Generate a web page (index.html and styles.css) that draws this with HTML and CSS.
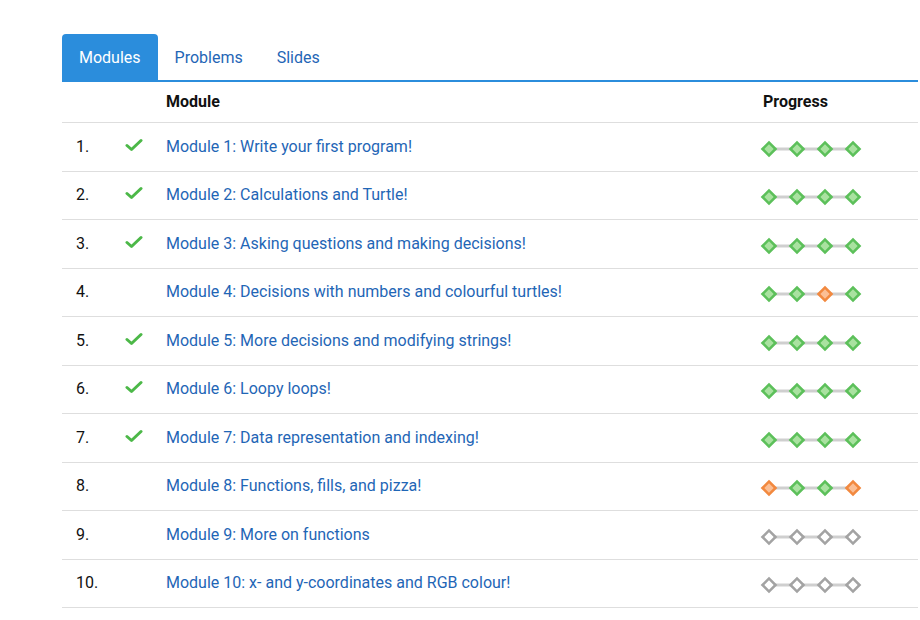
FILE: index.html
```html
<!DOCTYPE html>
<html>
<head>
<meta charset="utf-8">
<link rel="stylesheet" href="styles.css">
</head>
<body>
<div class="wrap">
  <ul class="tabs">
    <li class="tab active">Modules</li>
    <li class="tab">Problems</li>
    <li class="tab">Slides</li>
  </ul>
  <table class="mods">
    <thead>
      <tr><th class="c-num"></th><th class="c-chk"></th><th class="c-name">Module</th><th class="c-prog">Progress</th></tr>
    </thead>
    <tbody id="rows"></tbody>
  </table>
</div>
<script src="app.js"></script>
</body>
</html>
```
FILE: styles.css
```css
html, body { margin: 0; padding: 0; background: #fff; }
body { font-family: Roboto, "Liberation Sans", sans-serif; font-size: 16px; color: #111; }
.wrap { padding: 34px 0 0 62px; width: 856px; }
.tabs { list-style: none; margin: 0; padding: 0; display: flex; border-bottom: 2px solid #2b8ddc; }
.tab { padding: 1px 17px 0; height: 45px; line-height: 46px; color: #1f66b6; border-radius: 4px 4px 0 0; }
.tab.active { background: #2b8ddc; color: #fff; }
.mods { width: 100%; border-collapse: collapse; }
.mods th { text-align: left; font-weight: 700; height: 38px; padding: 0 0 2px; border-bottom: 1px solid #dedede; vertical-align: middle; }
.mods td { height: 46.5px; padding: 0 0 1px; border-bottom: 1px solid #dedede; vertical-align: middle; }
.c-num { width: 48px; padding-left: 14px !important; }
.c-chk { width: 42px; }
.mods .c-name { width: 597px; padding-right: 0; }
.mods a { color: #1f66b6; text-decoration: none; }
.chk { display: block; margin-left: 1px; margin-top: -3px; }
.prog { display: block; margin-left: -3px; margin-top: 5px; }
```
FILE: app.js
```js
const data = [
  ["Module 1: Write your first program!", true, "gggg"],
  ["Module 2: Calculations and Turtle!", true, "gggg"],
  ["Module 3: Asking questions and making decisions!", true, "gggg"],
  ["Module 4: Decisions with numbers and colourful turtles!", false, "ggog"],
  ["Module 5: More decisions and modifying strings!", true, "gggg"],
  ["Module 6: Loopy loops!", true, "gggg"],
  ["Module 7: Data representation and indexing!", true, "gggg"],
  ["Module 8: Functions, fills, and pizza!", false, "oggo"],
  ["Module 9: More on functions", false, "nnnn"],
  ["Module 10: x- and y-coordinates and RGB colour!", false, "nnnn"]
];
const col = { g: ["#5cc05a", "#a9e2a0"], o: ["#f2893f", "#fbbf95"], n: ["#a3a3a3", "#ffffff"] };
const check = '<svg class="chk" width="18" height="14" viewBox="0 0 18 14"><path d="M2 7.5 L6.5 11.5 L16 2.5" fill="none" stroke="#4cb848" stroke-width="3" stroke-linecap="round" stroke-linejoin="round"/></svg>';
function prog(s) {
  let out = '<svg class="prog" width="104" height="18" viewBox="0 0 104 18">';
  out += '<line x1="9" y1="9" x2="93" y2="9" stroke="#cfcfcf" stroke-width="3"/>';
  for (let i = 0; i < 4; i++) {
    const cx = 9 + i * 28, c = col[s[i]];
    out += `<rect x="${cx - 4.6}" y="4.4" width="9.2" height="9.2" transform="rotate(45 ${cx} 9)" fill="${c[1]}" stroke="${c[0]}" stroke-width="2.6"/>`;
  }
  return out + '</svg>';
}
const tb = document.getElementById('rows');
tb.innerHTML = data.map((d, i) =>
  `<tr><td class="c-num">${i + 1}.</td><td class="c-chk">${d[1] ? check : ''}</td><td class="c-name"><a href="#">${d[0]}</a></td><td class="c-prog">${prog(d[2])}</td></tr>`
).join('');
```
